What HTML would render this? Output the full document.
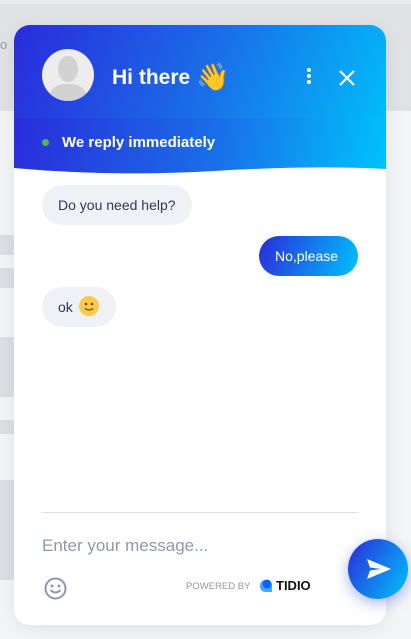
<!DOCTYPE html>
<html><head><style>
*{margin:0;padding:0;box-sizing:border-box}
body{width:411px;height:639px;overflow:hidden;position:relative;background:#f4f5f6;font-family:"Liberation Sans",sans-serif}
.topbg{position:absolute;left:0;top:0;width:411px;height:111px;background:#e0e2e6}
.line{position:absolute;left:0;top:0;width:411px;height:4px;background:#e9eaec}
.lb{position:absolute;left:0;width:14px;background:#dcdfe4}
.w{position:absolute;left:14px;top:25px;width:372px;height:600px;background:#fff;border-radius:16px;overflow:hidden;box-shadow:0 4px 20px rgba(0,0,0,.08)}
.hd{position:absolute;left:0;top:0;width:372px;height:150px;background:linear-gradient(110deg,#2a2bdb 0%,#1a6ee8 50%,#00c3fb 100%)}
.band{position:absolute;left:0;top:93px;width:372px;height:57px;background:linear-gradient(100deg,#2a2bdb 0%,#1a6ee8 55%,#00c3fb 100%);opacity:.9}
.av{position:absolute;left:28px;top:24px;width:52px;height:52px;border-radius:50%;background:#ededed;overflow:hidden}
.title{position:absolute;left:98px;top:38px;color:#fff;font-size:21px;font-weight:bold;line-height:28px}
.sub{position:absolute;left:48px;top:109px;color:#fff;font-size:15px;font-weight:bold}
.dot{position:absolute;left:28px;top:114px;width:7px;height:7px;border-radius:50%;background:#4db84a}
.b{position:absolute;height:40px;border-radius:20px;font-size:14px;line-height:40px;padding:0 16px;color:#323a4a}
.g{background:#eff1f6}
.inp{position:absolute;left:28px;top:511px;color:#8f97ab;font-size:17px}
.hr{position:absolute;left:28px;top:487px;width:316px;height:1px;background:#dde2ea}
.pw{position:absolute;left:172px;top:556px;font-size:9.5px;color:#8f97ab}
.td{position:absolute;left:262px;top:553px;font-size:13px;font-weight:bold;color:#111}
.send{position:absolute;left:348px;top:539px;width:60px;height:60px;border-radius:50%;background:linear-gradient(120deg,#2a2bdb,#00c3fb);box-shadow:0 4px 14px rgba(40,70,230,.4)}
</style></head><body>
<div class="topbg"></div><div class="line"></div>
<div class="lb" style="top:235px;height:20px"></div>
<div class="lb" style="top:268px;height:20px"></div>
<div class="lb" style="top:337px;height:60px"></div>
<div class="lb" style="top:420px;height:14px"></div>
<div class="lb" style="top:480px;height:100px"></div>
<div style="position:absolute;left:0;top:37px;color:#999;font-size:13px">o</div>
<div class="w">
<div class="hd"></div>
<div class="band"></div>
<svg style="position:absolute;left:0;top:140px" width="372" height="20"><path d="M0 3 Q100 12 200 6 T372 4 L372 20 L0 20Z" fill="#fff"/></svg>
<div class="av"><svg width="52" height="52"><ellipse cx="26" cy="20" rx="10" ry="13" fill="#d2d2d2"/><path d="M6 52 Q7 38 20 35 L32 35 Q45 38 46 52Z" fill="#d2d2d2"/></svg></div>
<div class="title">Hi there <span style="font-family:'Noto Color Emoji',sans-serif;font-size:27px;vertical-align:-2px">👋</span></div>
<svg style="position:absolute;left:292px;top:42px" width="6" height="18"><circle cx="3" cy="3" r="2" fill="#fff"/><circle cx="3" cy="9" r="2" fill="#fff"/><circle cx="3" cy="15" r="2" fill="#fff"/></svg>
<svg style="position:absolute;left:324px;top:44px" width="18" height="18"><path d="M2 2L16 16M16 2L2 16" stroke="#fff" stroke-width="2.2"/></svg>
<div class="dot"></div><div class="sub">We reply immediately</div>
<div class="b g" style="left:28px;top:160px">Do you need help?</div>
<div class="b" style="left:245px;top:211px;width:99px;color:#fff;background:linear-gradient(110deg,#2a2bdb,#00c3fb);padding:0 16px">No,please</div>
<div class="b g" style="left:28px;top:262px;width:74px">ok <svg width="20" height="20" style="vertical-align:middle;position:relative;top:-2px;margin-left:2px"><circle cx="10" cy="10" r="10" fill="#fcc94a"/><circle cx="7" cy="8" r="1.3" fill="#5a4a20"/><circle cx="13" cy="8" r="1.3" fill="#5a4a20"/><path d="M6 12.5 Q10 15.5 14 12.5" fill="none" stroke="#5a4a20" stroke-width="1.3"/></svg></div>
<div class="hr"></div>
<div class="inp">Enter your message...</div>
<svg style="position:absolute;left:30px;top:552px" width="23" height="23"><circle cx="11.5" cy="11.5" r="10" fill="none" stroke="#8f97ab" stroke-width="2"/><circle cx="8" cy="9" r="1.5" fill="#8f97ab"/><circle cx="15" cy="9" r="1.5" fill="#8f97ab"/><path d="M6.5 13 Q11.5 18 16.5 13" fill="none" stroke="#8f97ab" stroke-width="2"/></svg>
<div class="pw">POWERED BY</div>
<svg style="position:absolute;left:244px;top:553px" width="16" height="16"><path d="M2 8 Q2 14 8 14 L14 14 L14 8 Q14 2 8 2 Q2 2 2 8Z" fill="#47a7ff"/><circle cx="9" cy="6" r="4.5" fill="#0866ff"/></svg>
<div class="td">TIDIO</div>
</div>
<div class="send"><svg style="position:absolute;left:18px;top:19px" width="26" height="22"><path d="M1 1L25 11L1 21L4 12.5L15 11L4 9.5Z" fill="#fff"/></svg></div>
</body></html>
